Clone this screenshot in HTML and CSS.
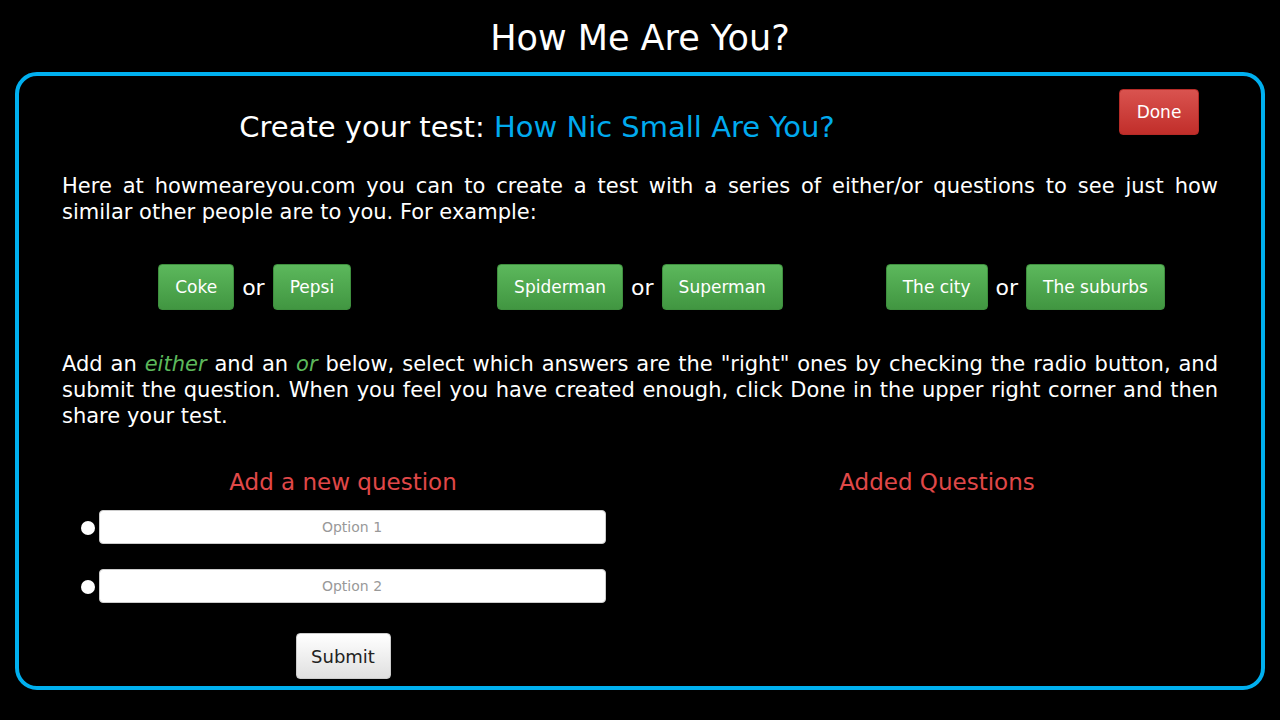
FILE: index.html
```html
<html>
<head>
<meta charset="utf-8" />
<title>How Me Are You?</title>
<link rel="stylesheet" href="styles.css">
</head>
<body>

<h1 class="site-title">How Me Are You?</h1>

<div id="panel">
    <div class="panel-head">
        <h2>Create your test: <span class="test-name">How Nic Small Are You?</span></h2>
        <button class="btn btn-done">Done</button>
    </div>

    <p class="intro">Here at howmeareyou.com you can to create a test with a series of either/or questions to see just how similar other people are to you. For example:</p>

    <div class="examples">
        <div class="pair"><span class="btn btn-green">Coke</span> or <span class="btn btn-green">Pepsi</span></div>
        <div class="pair"><span class="btn btn-green">Spiderman</span> or <span class="btn btn-green">Superman</span></div>
        <div class="pair"><span class="btn btn-green">The city</span> or <span class="btn btn-green">The suburbs</span></div>
    </div>

    <p class="intro">Add an <em>either</em> and an <em>or</em> below, select which answers are the "right" ones by checking the radio button, and submit the question. When you feel you have created enough, click Done in the upper right corner and then share your test.</p>

    <div class="columns">
        <div class="column">
            <h3>Add a new question</h3>
            <div class="option"><input type="radio" name="right" /><input type="text" placeholder="Option 1" /></div>
            <div class="option"><input type="radio" name="right" /><input type="text" placeholder="Option 2" /></div>
            <button class="btn-submit">Submit</button>
        </div>
        <div class="column">
            <h3>Added Questions</h3>
        </div>
    </div>
</div>

</body>
</html>
```

FILE: styles.css
```css
body {
    background: #000;
    color: #fff;
    margin: 0;
    padding: 0 15px;
    font-family: "DejaVu Sans", "Lucida Grande", Verdana, sans-serif;
}

h1.site-title {
    font-size: 35px;
    font-weight: normal;
    text-align: center;
    margin: 0;
    padding-top: 18px;
    height: 54px;
    line-height: 40px;
}

#panel {
    border: 4px solid #00b0f0;
    border-radius: 22px;
    height: 610px;
    padding: 0 43px;
}

.panel-head {
    position: relative;
    text-align: center;
    padding-top: 31px;
    padding-right: 206px;
}

.panel-head h2 {
    font-size: 29px;
    font-weight: normal;
    margin: 0;
    line-height: 40px;
}

.test-name {
    color: #00aaee;
}

.btn {
    display: inline-block;
    border-radius: 4px;
    color: #fff;
    font-family: "DejaVu Sans", "Lucida Grande", sans-serif;
}

.btn-done {
    position: absolute;
    top: 13px;
    right: 19px;
    width: 80px;
    height: 46px;
    font-size: 17px;
    border: 1px solid #b52b27;
    background: linear-gradient(#d9534f, #c12e2a);
}

p.intro {
    font-size: 21px;
    line-height: 26px;
    text-align: justify;
    margin: 26px 0 0;
}

.examples {
    display: grid;
    grid-template-columns: 1fr 1fr 1fr;
    margin-top: 39px;
    font-size: 22px;
}

.pair {
    display: flex;
    justify-content: center;
    align-items: center;
    gap: 8px;
}

.btn-green {
    font-size: 17px;
    line-height: 44px;
    padding: 0 16px;
    border: 1px solid #3e8f3e;
    background: linear-gradient(#5cb85c, #419641);
}

.examples + p.intro {
    margin-top: 41px;
}

em {
    color: #5cb85c;
}

.columns {
    display: grid;
    grid-template-columns: 1fr 1fr;
    margin: 38px -16px 0 -16px;
}

.column {
    display: flex;
    flex-direction: column;
    align-items: center;
}

.column h3 {
    color: #e04848;
    font-size: 23px;
    font-weight: normal;
    margin: 0 0 13px;
    line-height: 30px;
}

.option {
    display: flex;
    align-items: center;
    gap: 4px;
    margin-bottom: 25px;
}

.option input[type=radio] {
    width: 14px;
    height: 14px;
    margin: 2px 0 0;
    appearance: none;
    background: #fff;
    border-radius: 50%;
}

.option input[type=text] {
    width: 507px;
    height: 34px;
    box-sizing: border-box;
    border: 1px solid #ccc;
    border-radius: 4px;
    text-align: center;
    font-family: "DejaVu Sans", "Lucida Grande", sans-serif;
    font-size: 14px;
}

.option input::placeholder {
    color: #999;
}

.btn-submit {
    margin-top: 5px;
    width: 95px;
    height: 46px;
    border: 1px solid #ccc;
    border-radius: 4px;
    background: linear-gradient(#fff, #e0e0e0);
    font-family: "DejaVu Sans", "Lucida Grande", sans-serif;
    font-size: 18px;
    color: #222;
}
```
